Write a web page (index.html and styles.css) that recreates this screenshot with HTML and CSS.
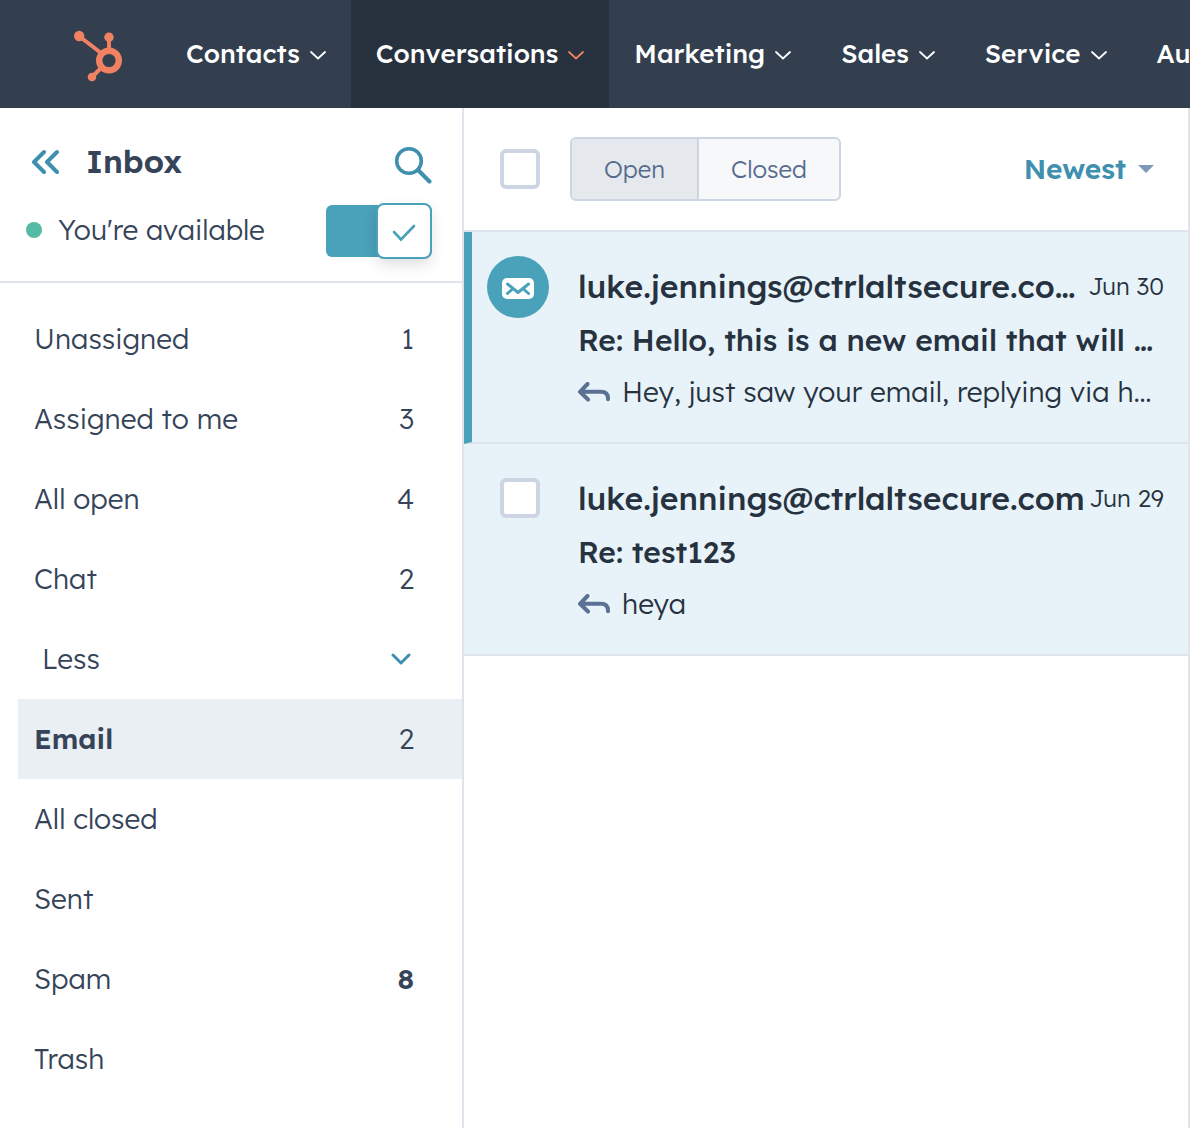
FILE: index.html
```html
<!DOCTYPE html>
<html lang="en">
<head>
<meta charset="utf-8">
<meta name="viewport" content="width=device-width, initial-scale=1">
<title>Inbox</title>
<link rel="stylesheet" href="styles.css">
</head>
<body>
<svg class="sprite" aria-hidden="true">
  <symbol id="chevron" viewBox="0 0 16 9"><path d="M1 1l7 6.500 7-6.500" fill="none" stroke="currentColor" stroke-width="1.800" stroke-linecap="round"/></symbol>
  <symbol id="reply" viewBox="0 0 32 20"><path d="M9.500 2L2 9.800l8 7.700M2.500 9.800H23q7 0 7 6.700v.800" fill="none" stroke="currentColor" stroke-width="4" stroke-linecap="round" stroke-linejoin="round"/></symbol>
</svg>
<header class="topbar">
  <a class="logo" href="#" aria-label="Home">
    <svg width="50" height="52" viewBox="0 0 50 52">
      <g fill="none" stroke="#f08262"><path d="M5 6l22 17M35 7v14M18 47l10-10" stroke-width="4"/><circle cx="35" cy="30.500" r="9.800" stroke-width="6.400"/></g>
      <g fill="#f08262"><circle cx="5.200" cy="6" r="5.200"/><circle cx="35" cy="7.200" r="4.700"/><circle cx="18" cy="47" r="4.300"/></g>
    </svg>
  </a>
  <nav class="menu" aria-label="Main">
    <a class="menu-item" href="#">Contacts<svg class="chevron"><use href="#chevron"/></svg></a>
    <a class="menu-item is-active" href="#" aria-current="page">Conversations<svg class="chevron"><use href="#chevron"/></svg></a>
    <a class="menu-item" href="#">Marketing<svg class="chevron"><use href="#chevron"/></svg></a>
    <a class="menu-item" href="#">Sales<svg class="chevron"><use href="#chevron"/></svg></a>
    <a class="menu-item" href="#">Service<svg class="chevron"><use href="#chevron"/></svg></a>
    <a class="menu-item" href="#">Automation<svg class="chevron"><use href="#chevron"/></svg></a>
  </nav>
</header>
<div class="workspace">
  <aside class="sidebar">
    <div class="sidebar-head">
      <div class="title-row">
        <button class="icon-button" type="button" aria-label="Collapse sidebar">
          <svg width="28" height="26" viewBox="0 0 28 26"><path d="M12 3L2 13l10 10M25 3L15 13l10 10" fill="none" stroke="currentColor" stroke-width="4" stroke-linecap="round" stroke-linejoin="round"/></svg>
        </button>
        <h1 class="title">Inbox</h1>
        <button class="icon-button search" type="button" aria-label="Search">
          <svg width="38" height="38" viewBox="0 0 38 38"><g fill="none" stroke="currentColor"><circle cx="15" cy="15" r="12.300" stroke-width="3.600"/><path d="M24 24l11.500 11.500" stroke-width="4" stroke-linecap="round"/></g></svg>
        </button>
      </div>
      <div class="status-row">
        <span class="dot"></span>
        <label class="status" for="available">You're available</label>
        <span class="switch">
          <input class="switch-input" id="available" type="checkbox" role="switch" checked>
          <span class="switch-knob"><svg width="24" height="18" viewBox="0 0 24 18"><path d="M2 8l7 7.500L22 2" fill="none" stroke="currentColor" stroke-width="2.600" stroke-linecap="round"/></svg></span>
        </span>
      </div>
    </div>
    <nav class="views" aria-label="Inbox views">
      <a class="view" href="#">Unassigned<span>1</span></a>
      <a class="view" href="#">Assigned to me<span>3</span></a>
      <a class="view" href="#">All open<span>4</span></a>
      <a class="view" href="#">Chat<span>2</span></a>
      <button class="view less" type="button">Less<svg class="less-chevron" viewBox="0 0 20 12"><path d="M2 2l8 8 8-8" fill="none" stroke="currentColor" stroke-width="3" stroke-linecap="round" stroke-linejoin="round"/></svg></button>
      <a class="view is-selected" href="#" aria-current="page"><b>Email</b><span>2</span></a>
      <a class="view" href="#">All closed</a>
      <a class="view" href="#">Sent</a>
      <a class="view" href="#">Spam<b>8</b></a>
      <a class="view" href="#">Trash</a>
    </nav>
  </aside>
  <main class="threads">
    <div class="toolbar">
      <input class="check" type="checkbox" aria-label="Select all conversations">
      <div class="segmented">
        <button class="segment is-on" type="button" aria-pressed="true">Open</button>
        <button class="segment" type="button" aria-pressed="false">Closed</button>
      </div>
      <button class="sort" type="button">Newest<svg width="16" height="8" viewBox="0 0 16 8"><path d="M0 0h16L8 8z" fill="#8297b8"/></svg></button>
    </div>
    <article class="thread is-current">
      <div class="lead">
        <span class="avatar"><svg width="32" height="22" viewBox="0 0 32 22"><rect width="32" height="21" rx="5" fill="#fff"/><path d="M5.500 6l10.500 8.500L26.500 6M5.500 15.500l4.500-4M26.500 15.500l-4.500-4" fill="none" stroke="#4aa1ba" stroke-width="3" stroke-linecap="round" stroke-linejoin="round"/></svg></span>
      </div>
      <div class="content">
        <div class="sender-row"><h2 class="sender">luke.jennings@ctrlaltsecure.co…</h2><time class="date" datetime="06-30">Jun 30</time></div>
        <p class="subject">Re: Hello, this is a new email that will …</p>
        <p class="preview"><svg class="reply"><use href="#reply"/></svg>Hey, just saw your email, replying via h…</p>
      </div>
    </article>
    <article class="thread">
      <div class="lead"><input class="check" type="checkbox" aria-label="Select Re: test123"></div>
      <div class="content">
        <div class="sender-row"><h2 class="sender">luke.jennings@ctrlaltsecure.com</h2><time class="date" datetime="06-29">Jun 29</time></div>
        <p class="subject">Re: test123</p>
        <p class="preview"><svg class="reply"><use href="#reply"/></svg>heya</p>
      </div>
    </article>
  </main>
</div>
</body>
</html>
```
FILE: styles.css
```css
* { box-sizing: border-box; }
body {
  margin: 0;
  min-height: 100vh;
  display: flex;
  flex-direction: column;
  overflow-x: hidden;
  background: #fff;
  color: #364459;
  font: 300 28px/40px "Lexend Deca", Inter, "Liberation Sans", sans-serif;
}
h1, h2, p { margin: 0; }
a { color: inherit; text-decoration: none; }
button { margin: 0; padding: 0; border: 0; background: none; color: inherit; font: inherit; cursor: pointer; }
svg { display: block; flex: none; }
.sprite { position: absolute; width: 0; height: 0; }

.topbar { display: flex; height: 108px; overflow: hidden; background: #333f4f; color: #fff; }
.logo { flex: none; width: 161px; padding: 30px 0 0 74px; }
.menu { display: flex; }
.menu-item {
  display: flex;
  align-items: center;
  justify-content: space-between;
  gap: 10px;
  padding: 0 25px;
  font-size: 26px;
  font-weight: 500;
  white-space: nowrap;
}
.menu-item.is-active { background: #28323f; }
.chevron { width: 16px; height: 9px; margin-top: 3px; }
.is-active .chevron { color: #f08262; }

.workspace { flex: 1; display: grid; grid-template-columns: 464px minmax(0, 1fr); }
.sidebar { border-right: 2px solid #dfe3eb; }
.sidebar-head { padding: 32px 30px 22px 26px; border-bottom: 2px solid #dfe3eb; }
.title-row, .status-row { display: flex; align-items: center; }
.title-row { gap: 26px; padding-left: 6px; height: 44px; }
.icon-button { color: #3f8fae; }
.title { flex: 1; padding-bottom: 3px; font-size: 32px; font-weight: 600; }
.search { padding-top: 6px; }
.status-row { gap: 16px; margin-top: 19px; height: 56px; }
.dot { width: 16px; height: 16px; margin-bottom: 2px; border-radius: 50%; background: #56bba4; }
.status { flex: 1; padding-bottom: 2px; }
.switch { position: relative; width: 106px; height: 56px; }
.switch-input { appearance: none; display: block; width: 100%; height: 52px; margin: 2px 0; border-radius: 6px; background: #4aa1ba; }
.switch-knob {
  position: absolute;
  top: 0;
  right: 0;
  display: grid;
  place-items: center;
  width: 56px;
  height: 56px;
  padding-top: 4px;
  border: 2px solid #4aa1ba;
  border-radius: 8px;
  background: #fff;
  color: #4aa1ba;
  box-shadow: 0 6px 14px rgba(0, 0, 0, .12);
  pointer-events: none;
}
.views { padding: 16px 0 16px 18px; }
.view { display: flex; align-items: center; justify-content: space-between; width: 100%; height: 80px; padding: 0 48px 0 16px; }
.view b { font-weight: 600; }
.less { padding-left: 24px; padding-right: 51px; }
.less-chevron { width: 20px; height: 12px; color: #3f8fae; }
.is-selected { background: #eaeff3; }

.threads { border-right: 2px solid #dfe3eb; }
.toolbar { display: flex; align-items: center; height: 124px; padding: 0 34px 0 36px; border-bottom: 2px solid #dfe3eb; }
.check { appearance: none; display: block; flex: none; width: 40px; height: 40px; margin: 0; border: 4px solid #cdd5e2; border-radius: 6px; background: #fff; }
.segmented { display: flex; height: 64px; margin-left: 30px; border: 2px solid #cbd6e2; border-radius: 6px; background: #f6f8fa; overflow: hidden; }
.segment { padding: 0 32px; color: #566b8e; font-size: 24px; }
.segment.is-on { background: #e5e9ee; border-right: 2px solid #cbd6e2; }
.sort { display: flex; align-items: center; gap: 12px; margin-left: auto; color: #3f8fae; font-weight: 600; }
.thread { display: flex; height: 212px; padding: 24px 24px 0 8px; border-bottom: 2px solid #dfe3eb; background: #e8f3f9; }
.is-current { border-left: 8px solid #4aa1ba; padding-left: 0; }
.lead { flex: none; width: 106px; padding: 10px 0 0 28px; }
.is-current .lead { padding: 0 0 0 15px; }
.avatar { display: grid; place-items: center; width: 62px; height: 62px; padding-top: 4px; border-radius: 50%; background: #4aa1ba; }
.content { flex: 1; min-width: 0; color: #273240; }
.sender-row { display: flex; align-items: center; justify-content: space-between; height: 60px; white-space: nowrap; }
.sender { font-size: 32px; font-weight: 500; }
.date { font-size: 24px; }
.subject { height: 48px; font-size: 30px; font-weight: 500; line-height: 48px; white-space: nowrap; }
.preview { display: flex; align-items: center; gap: 12px; height: 56px; white-space: nowrap; }
.reply { width: 32px; height: 20px; color: #5b7194; }
```
